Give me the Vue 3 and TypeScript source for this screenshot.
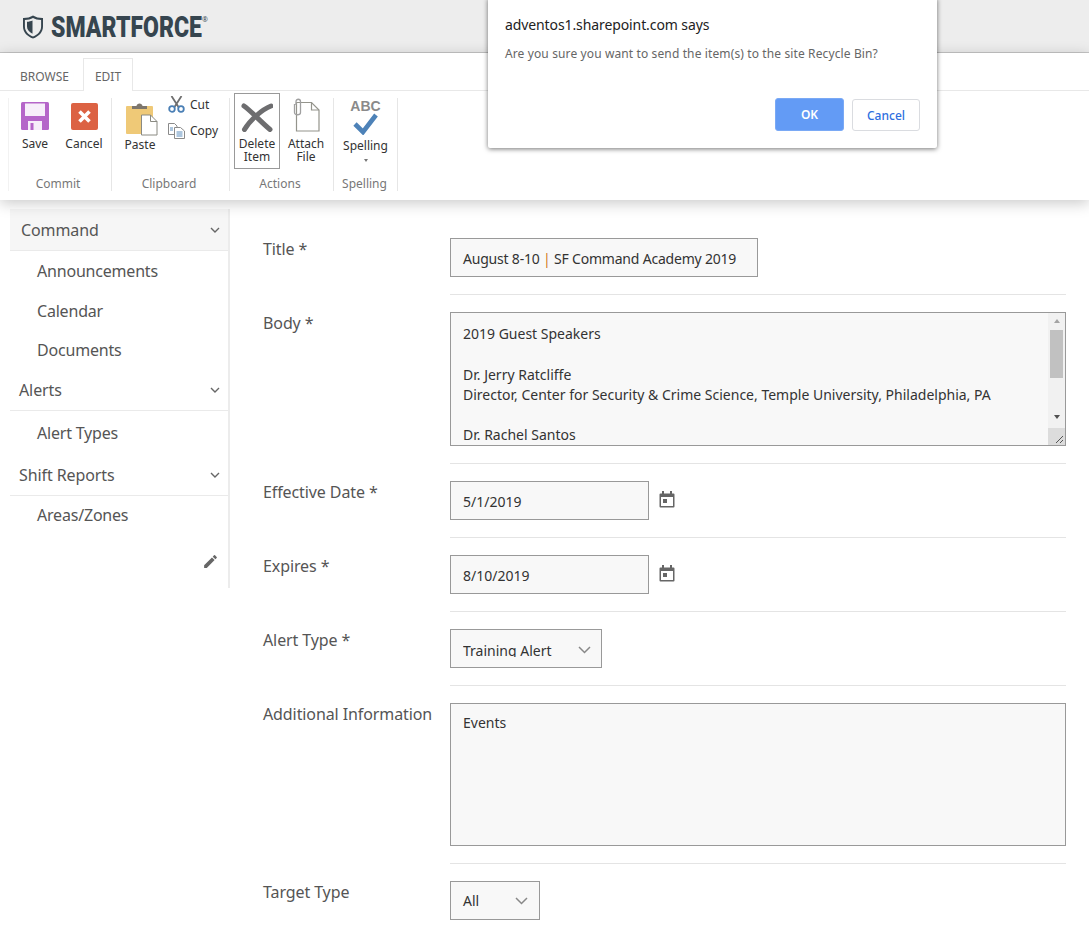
<template>
  <div class="page">
    <header class="topbar">
      <svg class="shield" viewBox="0 0 22 24" width="22" height="24">
        <path d="M11 .5C8.200 2.300 4.500 3.100 1 3v8.500c0 5.800 4.200 10 10 12 5.800-2 10-6.200 10-12V3c-3.500.1-7.200-.7-10-2.500z" fill="#36454f" />
        <path d="M11 2.900C9 4.200 6 4.900 2.900 4.900v6.600c0 4.500 3.200 8 8.100 10 4.900-2 8.100-5.500 8.100-10V4.900C16 4.900 13 4.200 11 2.900z" fill="#ededed" />
        <path d="M10.500 5.500C9 6.200 7 6.700 5 6.800v4.800c0 3 2 5.500 5.500 7.200z" fill="#36454f" />
      </svg>
      <span class="brand">SMARTFORCE</span><sup class="reg">®</sup>
    </header>

    <div class="ribbon">
      <div class="tabs">
        <span class="tab">BROWSE</span>
        <span class="tab active">EDIT</span>
      </div>
      <div class="groups">
        <section class="group commit">
          <div class="tools">
            <div class="tool save">
              <svg viewBox="0 0 28 28" width="28" height="28">
                <rect width="28" height="28" rx="1.500" fill="#b565c9" />
                <rect x="4" y="1.500" width="20" height="12.500" fill="#f7eefa" />
                <rect x="7" y="19" width="14" height="9" fill="#f7eefa" />
                <rect x="9.500" y="21" width="3" height="7" fill="#b565c9" />
              </svg>
              <span>Save</span>
            </div>
            <div class="tool cancel">
              <svg viewBox="0 0 27 27" width="27" height="27">
                <rect width="27" height="27" rx="2" fill="#dc6243" />
                <path d="M8.500 8.500l10 10M18.500 8.500l-10 10" stroke="#fff" stroke-width="3.600" />
              </svg>
              <span>Cancel</span>
            </div>
          </div>
          <div class="group-name">Commit</div>
        </section>

        <section class="group clipboard">
          <div class="tools">
            <div class="tool paste">
              <svg viewBox="0 0 32 34" width="32" height="34">
                <rect x="0" y="4" width="27" height="28" rx="1" fill="#efc977" />
                <path d="M6 7V4h4.500c.3-3.500 5.700-3.500 6 0H21v3z" fill="#7d766c" />
                <path d="M15.500 13h9l6.500 6.500V33H15.500z" fill="#fff" stroke="#8a8a82" stroke-width="1" />
                <path d="M24.500 13v6.500H31" fill="none" stroke="#8a8a82" stroke-width="1" />
              </svg>
              <span>Paste</span>
            </div>
            <div class="mini-tools">
              <div class="mini">
                <svg viewBox="0 0 17 17" width="17" height="17">
                  <path d="M3.500 0l7 11M13.500 0l-7 11" stroke="#6f6f6f" stroke-width="1.800" />
                  <circle cx="4" cy="13" r="2.800" fill="none" stroke="#4a7fb5" stroke-width="1.800" />
                  <circle cx="13" cy="13" r="2.800" fill="none" stroke="#4a7fb5" stroke-width="1.800" />
                </svg>
                <span>Cut</span>
              </div>
              <div class="mini">
                <svg viewBox="0 0 17 16" width="17" height="16">
                  <path d="M.5.5h6l2.500 2.500v8.500H.5z" fill="#fff" stroke="#8a8a8a" />
                  <path d="M6.500 4.500h6l4 3.500v7.500h-10z" fill="#fff" stroke="#8a8a8a" />
                  <path d="M8.500 9h6M8.500 11h6M8.500 13h6M2 5h3M2 7h3" stroke="#5b8dbd" />
                </svg>
                <span>Copy</span>
              </div>
            </div>
          </div>
          <div class="group-name">Clipboard</div>
        </section>

        <section class="group actions">
          <div class="tools">
            <div class="tool delete">
              <svg viewBox="0 0 32 29" width="32" height="29">
                <path d="M3 3c6 4 17 16 26 23.500M30 3C21 6.500 9 17 3.500 26.500" fill="none" stroke="#6d6d6f" stroke-width="5" stroke-linecap="round" />
              </svg>
              <span>Delete<br />Item</span>
            </div>
            <div class="tool attach">
              <svg viewBox="0 0 27 34" width="27" height="34">
                <path d="M3.500 4.500h15l7.500 7.500v21H3.500z" fill="#fff" stroke="#94948c" stroke-width="1.200" />
                <path d="M18.500 4.500V12H26" fill="none" stroke="#94948c" stroke-width="1.200" />
                <path d="M3 7V3.500c0-3 4.500-3 4.500 0v11c0 3-6 3-6 0V6" fill="none" stroke="#a0a0a0" stroke-width="1.300" />
              </svg>
              <span>Attach<br />File</span>
            </div>
          </div>
          <div class="group-name">Actions</div>
        </section>

        <section class="group spelling">
          <div class="tools">
            <div class="tool speller">
              <span class="abc">ABC</span>
              <svg viewBox="0 0 25 22" width="25" height="22">
                <path d="M2 11l8 8L23 2" fill="none" stroke="#4d82b8" stroke-width="4.600" />
              </svg>
              <span class="speller-name">Spelling</span>
              <i class="caret"></i>
            </div>
          </div>
          <div class="group-name">Spelling</div>
        </section>
      </div>
    </div>

    <main class="main">
      <nav class="side">
        <div v-for="section in nav" :key="section.title" class="nav-section" :class="section.cls">
          <div class="nav-head">
            <span>{{ section.title }}</span>
            <svg viewBox="0 0 10 6" width="10" height="6">
              <path d="M1 1l4 4 4-4" fill="none" stroke="#666" stroke-width="1.400" />
            </svg>
          </div>
          <a v-for="link in section.links" :key="link" class="nav-link">{{ link }}</a>
        </div>
        <div class="nav-edit">
          <svg viewBox="0 0 24 24" width="17" height="17">
            <path d="M3 17.250V21h3.750L17.810 9.940l-3.750-3.750L3 17.250zM20.710 7.040a1 1 0 0 0 0-1.410l-2.340-2.340a1 1 0 0 0-1.410 0l-1.830 1.830 3.750 3.750 1.830-1.830z" fill="#666" />
          </svg>
        </div>
      </nav>

      <form class="form">
        <div class="row">
          <label>Title *</label>
          <div class="field title-field">August 8-10 <b class="pipe">|</b> SF Command Academy 2019</div>
        </div>
        <div class="row">
          <label>Body *</label>
          <div class="field body-field">
            <div class="body-text">
              <p v-for="(line, i) in bodyLines" :key="i">{{ line }}</p>
            </div>
            <div class="scrollbar">
              <i class="arrow up"></i>
              <i class="thumb"></i>
              <i class="arrow down"></i>
            </div>
            <svg class="grip" viewBox="0 0 17 17" width="17" height="17">
              <path d="M8 15L15 8M12 15l3-3" stroke="#555" stroke-width="1" />
            </svg>
          </div>
        </div>
        <div v-for="d in dateRows" :key="d.label" class="row">
          <label>{{ d.label }}</label>
          <div class="field date-field">{{ d.value }}</div>
          <svg class="cal" viewBox="0 0 16 17" width="16" height="17">
            <path d="M1.500 2.500h13a1 1 0 0 1 1 1v12a1 1 0 0 1-1 1h-13a1 1 0 0 1-1-1v-12a1 1 0 0 1 1-1z" fill="#666" />
            <rect x="3" y="0" width="2" height="4" fill="#666" />
            <rect x="11" y="0" width="2" height="4" fill="#666" />
            <rect x="2" y="6" width="12" height="9" fill="#fff" />
            <rect x="4" y="8" width="4" height="4" fill="#666" />
          </svg>
        </div>
        <div class="row">
          <label>Alert Type *</label>
          <div class="field select-field alert-type">
            <span>Training Alert</span>
            <svg viewBox="0 0 13 8" width="13" height="8"><path d="M1 1l5.500 5.500L12 1" fill="none" stroke="#888" stroke-width="1.500" /></svg>
          </div>
        </div>
        <div class="row">
          <label>Additional Information</label>
          <div class="field info-field">Events</div>
        </div>
        <div class="row last">
          <label>Target Type</label>
          <div class="field select-field target-type">
            <span>All</span>
            <svg viewBox="0 0 13 8" width="13" height="8"><path d="M1 1l5.500 5.500L12 1" fill="none" stroke="#888" stroke-width="1.500" /></svg>
          </div>
        </div>
      </form>
    </main>

    <div class="dialog">
      <h3>adventos1.sharepoint.com says</h3>
      <p>Are you sure you want to send the item(s) to the site Recycle Bin?</p>
      <div class="dialog-buttons">
        <button class="ok">OK</button>
        <button class="no">Cancel</button>
      </div>
    </div>
  </div>
</template>

<script setup lang="ts">
const nav: { title: string; cls: string; links: string[] }[] = [
  { title: 'Command', cls: 'command', links: ['Announcements', 'Calendar', 'Documents'] },
  { title: 'Alerts', cls: 'alerts', links: ['Alert Types'] },
  { title: 'Shift Reports', cls: 'shifts', links: ['Areas/Zones'] }
]

const bodyLines = [
  '2019 Guest Speakers',
  '',
  'Dr. Jerry Ratcliffe',
  'Director, Center for Security & Crime Science, Temple University, Philadelphia, PA',
  '',
  'Dr. Rachel Santos'
]

const dateRows = [
  { label: 'Effective Date *', value: '5/1/2019' },
  { label: 'Expires *', value: '8/10/2019' }
]
</script>

<style>
html,
body {
  margin: 0;
  height: 100%;
  overflow: hidden;
  background: #fff;
}
</style>

<style scoped>
.page {
  position: relative;
  height: 944px;
  overflow: hidden;
  font-family: "Noto Sans", "Open Sans", sans-serif;
  color: #444;
}

.topbar {
  display: flex;
  align-items: center;
  height: 52px;
  padding-left: 22px;
  background: #ededed;
  border-bottom: 1px solid #c6c6c6;
  box-sizing: content-box;
}

.shield {
  flex: none;
  margin-top: 1px;
}

.brand {
  flex: none;
  width: 150px;
  margin: 2px 0 0 7px;
  font-family: "Roboto", sans-serif;
  font-weight: 900;
  font-size: 29.500px;
  color: #36454f;
  transform: scaleX(0.78);
  transform-origin: left center;
  white-space: nowrap;
}

.reg {
  font-size: 7px;
  line-height: 7px;
  color: #36454f;
  align-self: flex-start;
  margin: 16px 0 0 1px;
}

.ribbon {
  position: relative;
  z-index: 2;
  height: 147px;
  background: #fff;
  box-shadow: 0 3px 14px rgba(0, 0, 0, 0.22);
}

.tabs {
  display: flex;
  align-items: flex-end;
  height: 38px;
  padding-left: 8px;
  border-bottom: 1px solid #e8e8e8;
  box-sizing: border-box;
}

.tab {
  height: 32px;
  line-height: 38px;
  padding: 0 12px;
  font-size: 12px;
  color: #666;
}

.tab.active {
  height: 33px;
  margin: 0 0 -1px 2px;
  padding: 0 11px;
  background: #fff;
  border: 1px solid #e8e8e8;
  border-bottom: 0;
  box-sizing: border-box;
  line-height: 36px;
}

.groups {
  display: flex;
  padding: 7px 0 0 8px;
}

.group {
  display: flex;
  flex-direction: column;
  justify-content: space-between;
  height: 93px;
  border-right: 1px solid #e6e6e6;
  box-sizing: border-box;
}

.commit {
  width: 104px;
  border-left: 1px solid #f2f2f2;
}
.clipboard {
  width: 118px;
}
.actions {
  width: 104px;
}
.spelling {
  width: 64px;
}

.tools {
  display: flex;
}

.group-name {
  margin-bottom: -1px;
  text-align: center;
  font-size: 12px;
  line-height: 16px;
  color: #777;
}

.commit .group-name {
  padding-right: 4px;
}
.clipboard .group-name {
  padding-right: 3px;
}
.actions .group-name {
  padding-right: 3px;
}
.spelling .group-name {
  padding-right: 2px;
}

.tool {
  display: flex;
  flex-direction: column;
  align-items: center;
  font-size: 12px;
  line-height: 13px;
  color: #333;
  text-align: center;
}

.tool span {
  display: block;
}

.save {
  width: 50px;
  padding: 4px 0 0 1px;
}
.save span {
  margin-top: 7px;
}
.cancel {
  width: 48px;
  padding-top: 5px;
}
.cancel span {
  margin-top: 7px;
}
.paste {
  width: 56px;
  padding-top: 4px;
}
.paste svg {
  margin-left: 4px;
}
.paste span {
  margin-top: 2px;
}

.mini-tools {
  display: flex;
  flex-direction: column;
  margin-top: -2px;
}

.mini {
  display: flex;
  align-items: center;
  gap: 5px;
  height: 17px;
  margin-bottom: 9px;
  font-size: 12px;
  color: #333;
}

.delete {
  width: 46px;
  height: 76px;
  margin: -5px 0 0 4px;
  padding-top: 9px;
  border: 1px solid #999;
  box-sizing: border-box;
}
.delete span {
  margin-top: 5px;
}
.attach {
  width: 50px;
  margin-left: 1px;
}
.attach span {
  margin-top: 5px;
}

.speller {
  width: 63px;
  padding-top: 1px;
}
.abc {
  font-family: "Liberation Sans", sans-serif;
  font-weight: 700;
  font-size: 14px;
  color: #8a8a8a;
  line-height: 14px;
}
.speller-name {
  margin-top: 4px;
}
.caret {
  margin-top: 7px;
  border: 2.500px solid transparent;
  border-top: 3px solid #777;
  border-bottom: 0;
}

.main {
  display: flex;
  padding-top: 9px;
}

.side {
  width: 220px;
  height: 379px;
  margin-left: 10px;
  flex: none;
  box-sizing: border-box;
  border-right: 2px solid #ececec;
}

.nav-head {
  display: flex;
  align-items: center;
  justify-content: space-between;
  height: 40px;
  padding: 0 8px 0 9px;
  font-size: 16px;
  letter-spacing: -0.1px;
  color: #555;
  border-bottom: 1px solid #eaeaea;
}

.command .nav-head {
  height: 41px;
  padding-left: 11px;
  background: #f6f6f6;
}

.nav-link {
  display: block;
  height: 39.500px;
  line-height: 40px;
  padding-left: 27px;
  font-size: 16px;
  letter-spacing: -0.2px;
  color: #555;
}

.alerts .nav-link {
  height: 44px;
  line-height: 44px;
}

.shifts .nav-link {
  height: 39px;
  line-height: 38px;
}

.nav-edit {
  display: flex;
  justify-content: flex-end;
  padding: 18px 9px 0 0;
}

.form {
  flex: 1;
  min-width: 0;
  padding: 29px 23px 0 33px;
}

.row {
  position: relative;
  display: flex;
  padding-bottom: 18px;
  margin-bottom: 17px;
  font-size: 14px;
}

.row::after {
  content: "";
  position: absolute;
  left: 187px;
  right: 0;
  bottom: 0;
  border-bottom: 1px solid #e4e4e4;
}

.row.last::after {
  display: none;
}

label {
  flex: none;
  width: 187px;
  font-size: 16px;
  letter-spacing: -0.1px;
  line-height: 22px;
  color: #555;
}

.field {
  box-sizing: border-box;
  height: 39px;
  padding: 0 12px;
  line-height: 39px;
  background: #f8f8f8;
  border: 1px solid #999;
  color: #333;
}

.pipe {
  color: #d2791e;
  font-weight: 400;
}

.title-field {
  width: 308px;
  letter-spacing: -0.2px;
}

.body-field {
  position: relative;
  display: flex;
  flex: 1;
  height: 134px;
  padding: 0;
  line-height: 20.300px;
  overflow: hidden;
}

.body-text {
  flex: 1;
  padding: 11px 12px;
}

.body-text p {
  margin: 0;
  min-height: 20.300px;
}

.scrollbar {
  display: flex;
  flex-direction: column;
  align-items: center;
  width: 17px;
  background: #f1f1f1;
}

.thumb {
  width: 13px;
  height: 48px;
  margin-top: 7px;
  background: #c1c1c1;
}

.arrow {
  width: 0;
  border: 3.500px solid transparent;
}

.arrow.up {
  margin-top: 6px;
  border-top: 0;
  border-bottom: 4px solid #a3a3a3;
}

.arrow.down {
  margin-top: 37px;
  border-bottom: 0;
  border-top: 4px solid #505050;
}

.grip {
  position: absolute;
  right: 0;
  bottom: 0;
  background: #dcdcdc;
}

.date-field {
  width: 199px;
}

.cal {
  margin: 10px 0 0 10px;
}

.select-field {
  display: flex;
  align-items: center;
  justify-content: space-between;
  padding-right: 10px;
  overflow: hidden;
}

.alert-type {
  width: 152px;
}

.alert-type span {
  align-self: flex-start;
  height: 15px;
  margin-top: 12px;
  line-height: 18px;
  overflow: hidden;
}

.alert-type svg {
  margin-top: 2px;
}

.target-type {
  width: 90px;
  padding-right: 11px;
}

.info-field {
  flex: 1;
  height: 143px;
  line-height: 38px;
}

.dialog {
  position: absolute;
  z-index: 5;
  left: 488px;
  top: -2px;
  width: 449px;
  height: 150px;
  box-sizing: border-box;
  padding: 17px 17px 0 17px;
  background: #fff;
  border-radius: 0 0 2px 2px;
  box-shadow: 0 1px 5px rgba(0, 0, 0, 0.55);
}

.dialog h3 {
  margin: 0;
  font-size: 14px;
  font-weight: 400;
  letter-spacing: -0.1px;
  line-height: 20px;
  color: #222;
}

.dialog p {
  margin: 10px 0 0;
  font-size: 12px;
  letter-spacing: 0.12px;
  line-height: 18px;
  color: #666;
}

.dialog-buttons {
  display: flex;
  justify-content: flex-end;
  align-items: flex-end;
  gap: 8px;
  margin-top: 35px;
}

.dialog button {
  font-family: inherit;
  font-size: 12px;
  border-radius: 3px;
}

.ok {
  width: 69px;
  height: 33px;
  font-weight: 600;
  background: #639bf5;
  border: 1px solid #7aa9f5;
  color: #fff;
}

.no {
  width: 68px;
  height: 32px;
  font-weight: 500;
  background: #fff;
  border: 1px solid #dadce0;
  color: #2e6fe0;
}
</style>
